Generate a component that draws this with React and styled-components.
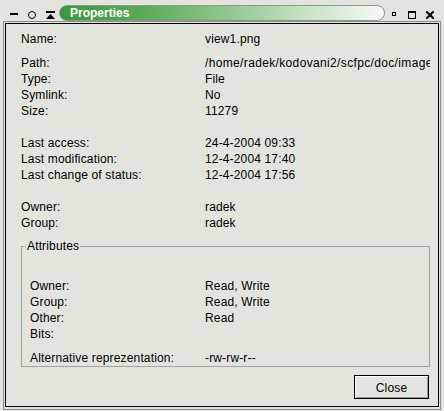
import React from 'react';
import styled, { createGlobalStyle } from 'styled-components';

const Global = createGlobalStyle`
  html, body { margin: 0; padding: 0; background: #e4e4df; }
  body {
    font-family: "Liberation Sans", Arial, Helvetica, sans-serif;
    font-size: 12px;
    color: #000;
  }
`;

const Window = styled.div`
  width: 444px;
  height: 411px;
  display: flex;
  flex-direction: column;
  background: #e4e4df;
  overflow: hidden;
`;

const TitleBar = styled.div`
  height: 21px;
  flex: none;
  display: flex;
  align-items: flex-start;
`;

const IconGroup = styled.div`
  display: flex;
  align-items: flex-start;
  gap: ${(p) => p.$gap}px;
  padding: 11px ${(p) => p.$right || 0}px 0 ${(p) => p.$left || 0}px;
`;

const TitlePill = styled.div`
  margin: 5px 0 0 ${(p) => p.$ml}px;
  width: 326px;
  height: 16px;
  box-sizing: border-box;
  border: 1px solid #8f9a8c;
  border-radius: 8px;
  background: linear-gradient(
    to right,
    #3c963c 0%,
    #58aa57 25%,
    #8cc58a 50%,
    #c6e1c3 75%,
    #f7f9f5 100%
  );
  padding-left: 10px;
  color: #fff;
  font-weight: bold;
  font-size: 12px;
  line-height: 14px;
  white-space: nowrap;
  overflow: hidden;
`;

const Frame = styled.div`
  flex: 1;
  display: flex;
  margin: 0 3px 1px 3px;
  border: 1px solid #8c8c88;
  padding: 1px 1px 2px 1px;
  min-height: 0;
`;

const Panel = styled.div`
  flex: 1;
  display: flex;
  flex-direction: column;
  border: 1px solid #000;
  padding: 7px 8px 7px 15px;
  min-width: 0;
`;

const InfoGrid = styled.div`
  display: grid;
  grid-template-columns: ${(p) => p.$label}px minmax(0, 1fr);
  grid-auto-rows: 16px;
  line-height: 16px;
  margin-top: ${(p) => p.$mt || 0}px;
  margin-left: ${(p) => p.$ml || 0}px;
`;

const Label = styled.div`
  white-space: nowrap;
  letter-spacing: 0.15px;
`;

const Value = styled.div`
  white-space: nowrap;
  overflow: hidden;
  letter-spacing: ${(p) => (p.$wide ? 0.35 : 0.15)}px;
`;

const GroupBox = styled.fieldset`
  margin: 7px 0 0 0;
  padding: 24px 0 0 4px;
  border: 1px solid #a2a29e;
  min-width: 0;
`;

const Legend = styled.legend`
  padding: 0 1px;
  margin: 0;
  line-height: 16px;
  font-size: 12px;
  letter-spacing: 0.15px;
`;

const ButtonRow = styled.div`
  margin-top: auto;
  display: flex;
  justify-content: flex-end;
`;

const Button = styled.button`
  width: 75px;
  height: 24px;
  box-sizing: border-box;
  border: 1px solid #000;
  background: #e4e4df;
  box-shadow: inset 1px 1px 0 #fff, inset -1px -1px 0 #9a9a96;
  font-family: "Liberation Sans", Arial, sans-serif;
  font-size: 12px;
  letter-spacing: 0.15px;
  color: #000;
  padding: 1px 0 0 0;
  margin-right: 1px;
`;

const Row = ({ label, value, wide }) => (
  <>
    <Label>{label}</Label>
    <Value $wide={wide}>{value}</Value>
  </>
);

export default function App() {
  return (
    <>
      <Global />
      <Window>
        <TitleBar>
          <IconGroup $gap={10} $left={10}>
            <svg width="8" height="8" viewBox="0 0 8 8">
              <rect x="0" y="2" width="8" height="2" fill="#000" />
            </svg>
            <svg width="8" height="8" viewBox="0 0 8 8">
              <circle cx="4" cy="4" r="3.5" fill="none" stroke="#000" strokeWidth="1" />
            </svg>
            <svg width="9" height="8" viewBox="0 0 9 8">
              <rect x="0" y="0" width="9" height="2" fill="#000" />
              <polygon points="4.5,3 0,8 9,8" fill="#000" />
            </svg>
          </IconGroup>
          <TitlePill $ml={4}>Properties</TitlePill>
          <IconGroup $gap={12} $left={7}>
            <svg width="4" height="8" viewBox="0 0 4 8">
              <rect x="0.5" y="1.5" width="3" height="3" fill="none" stroke="#000" strokeWidth="1" />
            </svg>
            <svg width="8" height="8" viewBox="0 0 8 8">
              <rect x="0.5" y="0.5" width="7" height="7" fill="none" stroke="#000" strokeWidth="1" />
              <rect x="0" y="0" width="8" height="2" fill="#000" />
            </svg>
            <svg width="8" height="8" viewBox="0 0 8 8" style={{ marginLeft: -2 }}>
              <path d="M1 1L7 7M7 1L1 7" stroke="#000" strokeWidth="2" strokeLinecap="square" />
            </svg>
          </IconGroup>
        </TitleBar>
        <Frame>
          <Panel>
            <InfoGrid $label={184}>
              <Row label="Name:" value="view1.png" />
            </InfoGrid>
            <InfoGrid $label={184} $mt={8}>
              <Row label="Path:" value="/home/radek/kodovani2/scfpc/doc/images/view1.png" wide />
              <Row label="Type:" value="File" />
              <Row label="Symlink:" value="No" />
              <Row label="Size:" value="11279" />
            </InfoGrid>
            <InfoGrid $label={184} $mt={16}>
              <Row label="Last access:" value="24-4-2004 09:33" />
              <Row label="Last modification:" value="12-4-2004 17:40" />
              <Row label="Last change of status:" value="12-4-2004 17:56" />
            </InfoGrid>
            <InfoGrid $label={184} $mt={16}>
              <Row label="Owner:" value="radek" />
              <Row label="Group:" value="radek" />
            </InfoGrid>
            <GroupBox>
              <Legend>Attributes</Legend>
              <InfoGrid $label={175} $ml={4}>
                <Row label="Owner:" value="Read, Write" />
                <Row label="Group:" value="Read, Write" />
                <Row label="Other:" value="Read" />
                <Row label="Bits:" value="" />
              </InfoGrid>
              <InfoGrid $label={175} $ml={4} $mt={8}>
                <Row label="Alternative reprezentation:" value="-rw-rw-r--" />
              </InfoGrid>
            </GroupBox>
            <ButtonRow>
              <Button>Close</Button>
            </ButtonRow>
          </Panel>
        </Frame>
      </Window>
    </>
  );
}
